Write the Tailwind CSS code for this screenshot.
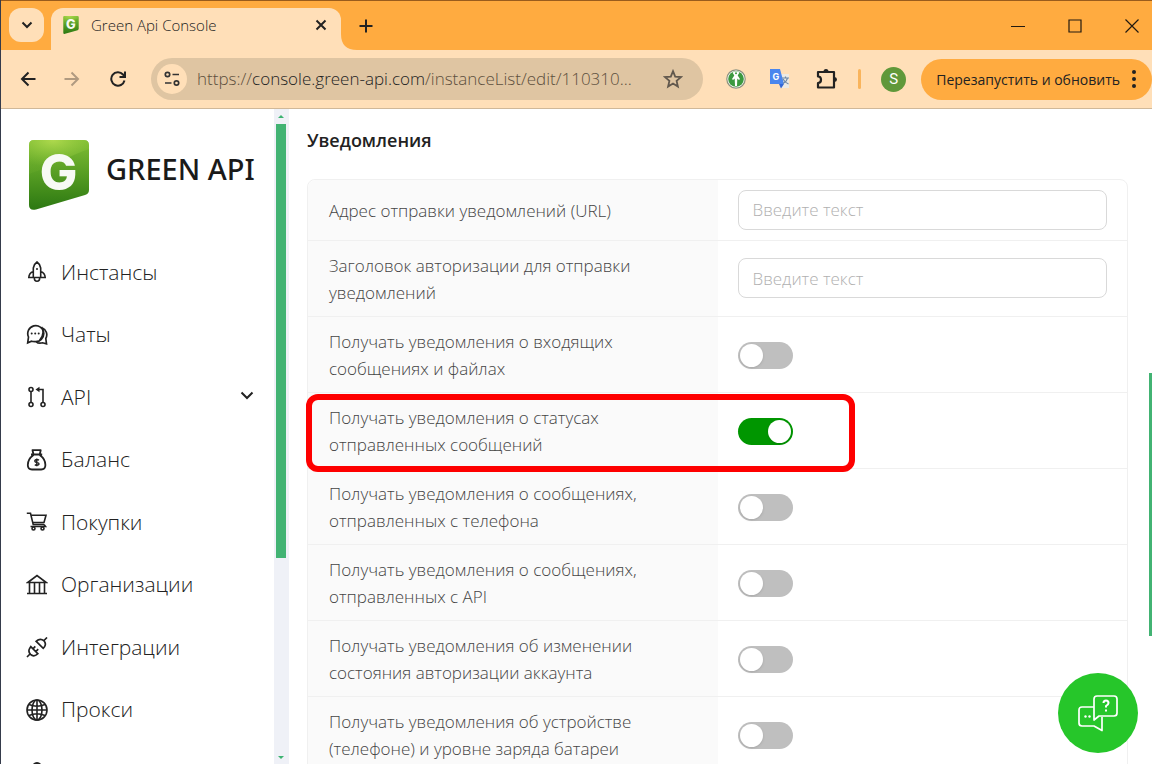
<!DOCTYPE html>
<html lang="ru">
<head>
<meta charset="utf-8">
<title>Green Api Console</title>
<script src="https://cdn.jsdelivr.net/npm/@tailwindcss/browser@4"></script>
</head>
<body class="flex h-screen flex-col overflow-hidden border-l border-[#353b4b] bg-white font-['Open_Sans','Noto_Sans',sans-serif] text-[#222]">

<svg class="absolute size-0" aria-hidden="true">
  <defs>
    <linearGradient id="leaf" x1="0" y1="0" x2="0" y2="1">
      <stop offset="0" stop-color="#7fbd34"/><stop offset="0.5" stop-color="#559c22"/><stop offset="1" stop-color="#2c7812"/>
    </linearGradient>
    <radialGradient id="shine" cx="0.4" cy="0" r="0.8">
      <stop offset="0" stop-color="#b4dc50" stop-opacity="0.9"/><stop offset="1" stop-color="#8cc63a" stop-opacity="0.1"/>
    </radialGradient>
    <symbol id="logo" viewBox="0 0 60 70">
      <path fill="url(#leaf)" d="M5 0H55Q60 0 60 5V50Q60 54 56 55L7 69.500Q0 71 0 65V5Q0 0 5 0Z"/>
      <path fill="url(#shine)" d="M5 0H55Q60 0 60 5V9C44 14 24 26 0 34V5Q0 0 5 0Z"/>
      <text x="29.500" y="50" text-anchor="middle" font-family="Inter, sans-serif" font-weight="800" font-size="50" fill="#f7faf4">G</text>
    </symbol>
  </defs>
</svg>

<header class="shrink-0 border-b border-[#d0b899] bg-[#ffdfb8]">
  <div class="flex h-[50px] items-stretch border-t border-[#9a5c1c] bg-[#ffab40]">
    <div class="flex w-[50px] items-start pt-[7px] pl-2">
      <button type="button" aria-label="Поиск вкладок" class="flex h-[34px] w-[35px] items-center justify-center rounded-xl bg-[#ffdfb8]">
        <svg class="size-3" viewBox="0 0 12 12" fill="none" stroke="#222" stroke-width="2"><path d="M1.500 3.500 6 8l4.500-4.500"/></svg>
      </button>
    </div>
    <div class="flex w-[290px] pt-[7px]">
      <div class="flex flex-1 items-center rounded-t-xl bg-[#ffdfb8] pb-2 pl-3 pr-[14px]">
        <svg class="h-[18px] w-4"><use href="#logo"/></svg>
        <span class="ml-3 flex-1 text-[15px] font-light">Green Api Console</span>
        <button type="button" aria-label="Закрыть вкладку"><svg class="size-3" viewBox="0 0 12 12" fill="none" stroke="#222" stroke-width="2"><path d="m1.500 1.500 9 9m0-9-9 9"/></svg></button>
      </div>
    </div>
    <svg class="w-4 self-end" height="16" viewBox="0 0 16 16" fill="#ffdfb8"><path d="M0 0V16H16Q0 16 0 0Z"/></svg>
    <button type="button" aria-label="Новая вкладка" class="ml-0.5"><svg class="size-[14px]" viewBox="0 0 14 14" fill="none" stroke="#222" stroke-width="2"><path d="M7 .5v13M.5 7h13"/></svg></button>
    <div class="ml-auto flex items-center gap-[43px] pr-[13px]">
      <button type="button" aria-label="Свернуть"><svg class="size-[14px]" viewBox="0 0 14 14" stroke="#221a10"><path d="M0 7.500h14"/></svg></button>
      <button type="button" aria-label="Развернуть"><svg class="size-[14px]" viewBox="0 0 14 14" fill="none" stroke="#221a10" stroke-width="1.200"><path d="M1 1h12v12H1z"/></svg></button>
      <button type="button" aria-label="Закрыть"><svg class="size-[14px]" viewBox="0 0 14 14" fill="none" stroke="#221a10" stroke-width="1.200"><path d="m.5.5 13 13m0-13-13 13"/></svg></button>
    </div>
  </div>

  <div class="flex h-[58px] items-center pl-[19px]">
    <button type="button" aria-label="Назад"><svg class="size-4" viewBox="0 0 16 16" fill="none" stroke="#222" stroke-width="2"><path d="M15.500 8H2M8.500 1.500 2 8l6.500 6.500"/></svg></button>
    <button type="button" aria-label="Вперёд" class="ml-7"><svg class="size-4" viewBox="0 0 16 16" fill="none" stroke="#b09a80" stroke-width="2"><path d="M.5 8H14M7.500 1.500 14 8l-6.500 6.500"/></svg></button>
    <button type="button" aria-label="Обновить" class="ml-[30px]"><svg class="size-4" viewBox="0 0 16 16" fill="none" stroke="#222" stroke-width="2"><path d="M14.500 9.500A6.700 6.700 0 1 1 13 3.500L14.800 5.500"/><path d="M15 .5v5.500H9.500"/></svg></button>
    <div class="ml-[25px] flex h-[42px] min-w-0 flex-1 items-center rounded-full bg-[#dfc5a2] pl-1.5 pr-5">
      <button type="button" aria-label="Сведения о сайте" class="flex size-[30px] shrink-0 items-center justify-center rounded-full bg-[#ffdfb8]">
        <svg class="size-4" viewBox="0 0 16 16" fill="none" stroke="#333" stroke-width="1.700"><circle cx="3.500" cy="3.500" r="2.200"/><path d="M8.500 3.500H15M1 12h6.500"/><circle cx="12.500" cy="12" r="2.200"/></svg>
      </button>
      <div class="ml-2.5 min-w-0 flex-1 whitespace-nowrap text-[17px] font-light text-[#5d4f3d]">https://<span class="text-[#222]">console.green-api.com</span>/instanceList/edit/110310...</div>
      <button type="button" aria-label="Добавить в закладки"><svg class="size-5" viewBox="0 0 20 20" fill="none" stroke="#61584d" stroke-width="1.800"><path d="m10 2.200 2.200 5.400 5.800.5-4.400 3.800 1.300 5.700-4.900-3-4.900 3 1.300-5.700L2 8.100l5.800-.5Z"/></svg></button>
    </div>
    <div class="flex items-center pl-[23px]">
      <svg class="size-5" viewBox="0 0 20 20"><circle cx="10" cy="10" r="9.200" fill="#fff" stroke="#8d927f" stroke-width="1.200"/><circle cx="10" cy="10" r="7.800" fill="#3c9940"/><path fill="#fff" d="M6.500 3.500Q10 1.500 13.500 3.500L11.700 6.500 14 10l-1 1-1.700-1.500L11 17H9l-.3-7.500L7 11l-1-1 2.300-3.500Z"/><circle cx="10" cy="4.300" r="1" fill="#3c9940"/></svg>
      <svg class="ml-6 size-5" viewBox="0 0 20 20"><path fill="#eceae5" d="M8 5h11v14h-7Z"/><path fill="#4a86ee" d="M0 0h10l4 15H0Z"/><path fill="#3367d6" d="M9 15h5l-3 4.500Z"/><text x="2.500" y="11" font-family="Inter, sans-serif" font-weight="700" font-size="9" fill="#fff">G</text><path fill="none" stroke="#6b87a8" stroke-width="1.200" d="M12 9h7M15.500 7.500V9m2 0c-.5 2.500-2.500 4.500-4.500 5.500m0-4.500c1 2 3 4 5.500 5"/></svg>
      <button type="button" aria-label="Расширения" class="ml-[26px]"><svg class="size-[22px]" viewBox="0 0 22 22"><path fill="none" stroke="#222" stroke-width="2.200" stroke-linejoin="round" d="M2 4h16v15.500H2V15c4 0 4-6.500 0-6.500Z"/><path fill="#222" d="M7.500 3.500a2.500 2.500 0 0 1 5 0ZM18.500 9v5a2.500 2.500 0 0 0 0-5Z"/></svg></button>
      <span class="ml-5 h-5 w-[3px] rounded-full bg-[#f9b45c]"></span>
      <span class="ml-5 flex size-[25px] items-center justify-center rounded-full bg-[#60983a] font-['Roboto',sans-serif] text-[15px] text-white">S</span>
      <button type="button" class="ml-[15px] flex h-[41px] items-center whitespace-nowrap rounded-full bg-[#ffab40] pl-[15px] pr-4 text-[14px]">Перезапустить и обновить
        <svg class="ml-3 h-[18px] w-1" viewBox="0 0 4 18" fill="#222"><circle cx="2" cy="2" r="2"/><circle cx="2" cy="9" r="2"/><circle cx="2" cy="16" r="2"/></svg>
      </button>
    </div>
  </div>
</header>

<div class="flex min-h-0 flex-1">
  <aside class="flex w-[273px] shrink-0 flex-col overflow-hidden pl-[25px] pr-5">
    <a href="#" class="flex h-[132px] shrink-0 items-center gap-[17px] pl-[3px]">
      <svg class="h-[70px] w-[60px] shrink-0"><use href="#logo"/></svg>
      <span class="mb-3 whitespace-nowrap font-['Noto_Sans',sans-serif] text-[29px] font-medium text-[#1a1a1a]">GREEN API</span>
    </a>
    <nav class="grid h-[563px] shrink-0 grid-rows-9 text-[21px] font-light text-[#222]">
      <a href="#" class="flex items-center gap-[13px]">
        <svg class="size-[22px]" viewBox="0 0 22 22" fill="none" stroke="#222" stroke-width="1.600"><path d="M7.300 16.500V7Q8 3 11 1q3 2 3.700 6v9.500ZM7.300 10.500Q3 12 2.800 16.500h16.400Q19 12 14.700 10.500M8.300 16.500q0 3.800 2.700 3.800t2.700-3.800"/><circle cx="11" cy="8" r="1" fill="#222" stroke="none"/></svg>Инстансы</a>
      <a href="#" class="flex items-center gap-[13px]">
        <svg class="size-[22px]" viewBox="0 0 22 22" fill="none" stroke="#222" stroke-width="1.700"><path d="M1.700 18.800 2.500 13A8 8 0 1 1 9 17.600Q6.500 17.600 5.500 17.200ZM16 3.800A7.500 7.500 0 0 1 19.800 14.500L20.500 19.800 16.500 18.800Q12.500 20 10 17.600M15.500 3Q19.500 9.500 13.500 16.500"/><g fill="#222" stroke="none"><circle cx="5.700" cy="9.500" r="1"/><circle cx="9.200" cy="9.500" r="1"/><circle cx="12.700" cy="9.500" r="1"/></g></svg>Чаты</a>
      <a href="#" class="flex items-center gap-[13px]">
        <svg class="size-[22px]" viewBox="0 0 22 22" fill="none" stroke="#222" stroke-width="1.600"><circle cx="5" cy="3.500" r="2"/><circle cx="5" cy="18.500" r="2"/><circle cx="17" cy="18.500" r="2"/><path d="M5 5.500v11M17 16.500V3.500h-5"/><path fill="#222" stroke="none" d="M9.500 3.500 13.500.8v5.400Z"/></svg>API
        <svg class="ml-auto mb-1 h-3 w-[14px]" viewBox="0 0 14 12" fill="none" stroke="#222" stroke-width="2"><path d="m1.500 3.500 5.500 5.500 5.500-5.500"/></svg></a>
      <a href="#" class="flex items-center gap-[13px]">
        <svg class="size-[22px]" viewBox="0 0 22 22" fill="none" stroke="#222" stroke-width="1.800" stroke-linejoin="round"><path d="M7.500 5.500 6.500 1.200h8.200L13.700 5.500M5 5.500h11.200M7.500 6C4 8.500 1.800 12 1.800 16 1.800 19.300 3.500 20.500 6 20.500h9.200c2.500 0 4.200-1.200 4.200-4.500 0-4-2.200-7.500-5.700-10"/><path stroke-width="1.400" d="M13 11.200q-2.300-1.500-4 0-.8 1.600 1.600 2.200 3 .5 2.200 2.200-1.700 1.500-4 0M10.800 9.500v7.800"/></svg>Баланс</a>
      <a href="#" class="flex items-center gap-[13px]">
        <svg class="size-[22px]" viewBox="0 0 22 22" fill="none" stroke="#222" stroke-width="1.600"><path d="M.8 2.300h3.700L7.200 13.500H18M5 4.300h15L18 11.500H7M4.500 15.500H19.500L18 13.500"/><circle cx="7.500" cy="17.500" r="1.500"/><circle cx="16.500" cy="17.500" r="1.500"/></svg>Покупки</a>
      <a href="#" class="flex items-center gap-[13px]">
        <svg class="size-[22px]" viewBox="0 0 22 22" fill="none" stroke="#222" stroke-width="1.600"><path d="M1 19.500h20M1.800 8.500 11 1.500l9.200 7ZM3.500 8.500v11M8.500 8.500v11M13.500 8.500v11M18.500 8.500v11"/></svg>Организации</a>
      <a href="#" class="flex items-center gap-[13px]">
        <svg class="size-[22px]" viewBox="0 0 22 22" fill="none" stroke="#222" stroke-width="1.700"><path d="m1 20 3-3M18 3.500l3-3M4.800 9.700l7 7-1.500 1.200q-3 2-5.800-.5-2.700-3-.8-6ZM10.200 4.300l7 7 1.300-1.500q2-3-.5-6-3-2.500-6-.8ZM7 11.800l2.300-2.400M9.800 14.600l2.400-2.400"/></svg>Интеграции</a>
      <a href="#" class="flex items-center gap-[13px]">
        <svg class="size-[22px]" viewBox="0 0 22 22" fill="none" stroke="#222" stroke-width="1.600"><circle cx="11" cy="11" r="10"/><ellipse cx="11" cy="11" rx="5" ry="10"/><path d="M11 1v20M1 11h20M3 5.500q8 3.500 16 0M3 16.500q8-3.500 16 0"/></svg>Прокси</a>
      <a href="#" aria-label="Профиль" class="flex items-center">
        <svg class="size-[22px]" viewBox="0 0 22 22" fill="none" stroke="#222" stroke-width="1.800"><circle cx="11" cy="5.500" r="4.500"/><path d="M2 21q1-9 9-9t9 9"/></svg></a>
    </nav>
  </aside>

  <div class="flex w-[15px] shrink-0 flex-col items-start bg-[#eff1f7] pl-0.5" aria-hidden="true">
    <div class="flex flex-1 flex-col items-center">
      <svg class="my-[6px] h-[3px] w-[6px] shrink-0" viewBox="0 0 6 3" fill="#3cb371"><path d="M0 3 3 0l3 3Z"/></svg>
      <div class="h-[434px] w-[10px] bg-[#42b373]"></div>
      <svg class="mt-auto mb-[5px] h-[3px] w-[6px] shrink-0" viewBox="0 0 6 3" fill="#3cb371"><path d="m0 0 3 3 3-3Z"/></svg>
    </div>
  </div>

  <main class="min-w-0 flex-1 overflow-hidden pl-[18px] pr-[21px]">
    <h2 class="mt-[17px] mb-[25px] text-[18px] font-semibold leading-7">Уведомления</h2>
    <div class="rounded-lg border border-[#f0f0f0]">
      <table class="w-full table-fixed border-collapse text-[17px] leading-[27px] text-[#444]">
        <tbody class="font-light">
          <tr class="h-[60px] border-b border-[#f0f0f0]">
            <th scope="row" class="w-1/2 rounded-tl-lg bg-[#fafafa] pt-0.5 pl-[21px] pr-[50px] text-left font-light"><label for="url">Адрес отправки уведомлений (URL)</label></th>
            <td class="px-5"><input id="url" type="text" placeholder="Введите текст" class="block h-10 w-full rounded-lg border border-[#d9d9d9] bg-white px-[14px] placeholder:text-[#b0b0b0]"></td>
          </tr>
          <tr class="h-[76px] border-b border-[#f0f0f0]">
            <th scope="row" class="bg-[#fafafa] pt-0.5 pl-[21px] pr-[50px] text-left font-light"><label for="auth">Заголовок авторизации для отправки уведомлений</label></th>
            <td class="px-5"><input id="auth" type="text" placeholder="Введите текст" class="block h-10 w-full rounded-lg border border-[#d9d9d9] bg-white px-[14px] placeholder:text-[#b0b0b0]"></td>
          </tr>
          <tr class="h-[76px] border-b border-[#f0f0f0]">
            <th scope="row" class="bg-[#fafafa] pt-0.5 pl-[21px] pr-[50px] text-left font-light"><label for="s1">Получать уведомления о входящих сообщениях и файлах</label></th>
            <td class="px-5 pt-0.5"><input id="s1" type="checkbox" role="switch" class="flex h-[27px] w-[55px] appearance-none items-center rounded-full bg-[#bfbfbf] px-0.5 before:size-[23px] before:rounded-full before:bg-white before:shadow-sm checked:justify-end checked:bg-[#009600]"></td>
          </tr>
          <tr class="relative h-[76px] border-b border-[#f0f0f0]">
            <th scope="row" class="bg-[#fafafa] pt-0.5 pl-[21px] pr-[50px] text-left font-light"><label for="s2">Получать уведомления о статусах отправленных сообщений</label></th>
            <td class="px-5 pt-0.5"><input id="s2" type="checkbox" role="switch" checked class="flex h-[27px] w-[55px] appearance-none items-center rounded-full bg-[#bfbfbf] px-0.5 before:size-[23px] before:rounded-full before:bg-white before:shadow-sm checked:justify-end checked:bg-[#009600]">
              <div class="pointer-events-none absolute -left-0.5 top-0.5 h-[78px] w-[549px] rounded-xl border-6 border-[#fe0000]"></div></td>
          </tr>
          <tr class="h-[76px] border-b border-[#f0f0f0]">
            <th scope="row" class="bg-[#fafafa] pt-0.5 pl-[21px] pr-[50px] text-left font-light"><label for="s3">Получать уведомления о сообщениях, отправленных с телефона</label></th>
            <td class="px-5 pt-0.5"><input id="s3" type="checkbox" role="switch" class="flex h-[27px] w-[55px] appearance-none items-center rounded-full bg-[#bfbfbf] px-0.5 before:size-[23px] before:rounded-full before:bg-white before:shadow-sm checked:justify-end checked:bg-[#009600]"></td>
          </tr>
          <tr class="h-[76px] border-b border-[#f0f0f0]">
            <th scope="row" class="bg-[#fafafa] pt-0.5 pl-[21px] pr-[50px] text-left font-light"><label for="s4">Получать уведомления о сообщениях, отправленных с API</label></th>
            <td class="px-5 pt-0.5"><input id="s4" type="checkbox" role="switch" class="flex h-[27px] w-[55px] appearance-none items-center rounded-full bg-[#bfbfbf] px-0.5 before:size-[23px] before:rounded-full before:bg-white before:shadow-sm checked:justify-end checked:bg-[#009600]"></td>
          </tr>
          <tr class="h-[76px] border-b border-[#f0f0f0]">
            <th scope="row" class="bg-[#fafafa] pt-0.5 pl-[21px] pr-[50px] text-left font-light"><label for="s5">Получать уведомления об изменении состояния авторизации аккаунта</label></th>
            <td class="px-5 pt-0.5"><input id="s5" type="checkbox" role="switch" class="flex h-[27px] w-[55px] appearance-none items-center rounded-full bg-[#bfbfbf] px-0.5 before:size-[23px] before:rounded-full before:bg-white before:shadow-sm checked:justify-end checked:bg-[#009600]"></td>
          </tr>
          <tr class="h-[76px] border-b border-[#f0f0f0]">
            <th scope="row" class="bg-[#fafafa] pt-0.5 pl-[21px] pr-[50px] text-left font-light"><label for="s6">Получать уведомления об устройстве (телефоне) и уровне заряда батареи</label></th>
            <td class="px-5 pt-0.5"><input id="s6" type="checkbox" role="switch" class="flex h-[27px] w-[55px] appearance-none items-center rounded-full bg-[#bfbfbf] px-0.5 before:size-[23px] before:rounded-full before:bg-white before:shadow-sm checked:justify-end checked:bg-[#009600]"></td>
          </tr>
        </tbody>
      </table>
    </div>
  </main>
  <div class="w-[3px] shrink-0 pt-[264px]" aria-hidden="true"><div class="h-[263px] bg-[#42b373]"></div></div>
</div>

<button type="button" aria-label="Помощь" class="fixed bottom-[11px] right-[14px] flex size-20 items-center justify-center rounded-full bg-[#26c62a]">
  <svg class="size-10" viewBox="0 0 40 40" fill="none" stroke="#fff" stroke-width="1.700" stroke-linejoin="round"><path d="M16 14H4q-3 0-3 3v13q0 3 3 3h12l8 4.500V24"/><path d="M19 3h17q3 0 3 3v14q0 3-3 3H21l-5 4V6q0-3 3-3Z"/><g fill="#fff" stroke="none"><circle cx="7.500" cy="23.500" r="1.200"/><circle cx="11.500" cy="23.500" r="1.200"/></g><path stroke-width="2" d="M25.500 10q0-2.500 2.500-2.500t2.500 2.500q0 1.500-2.500 3v1.500M28 16.500v2"/></svg>
</button>
</body>
</html>
